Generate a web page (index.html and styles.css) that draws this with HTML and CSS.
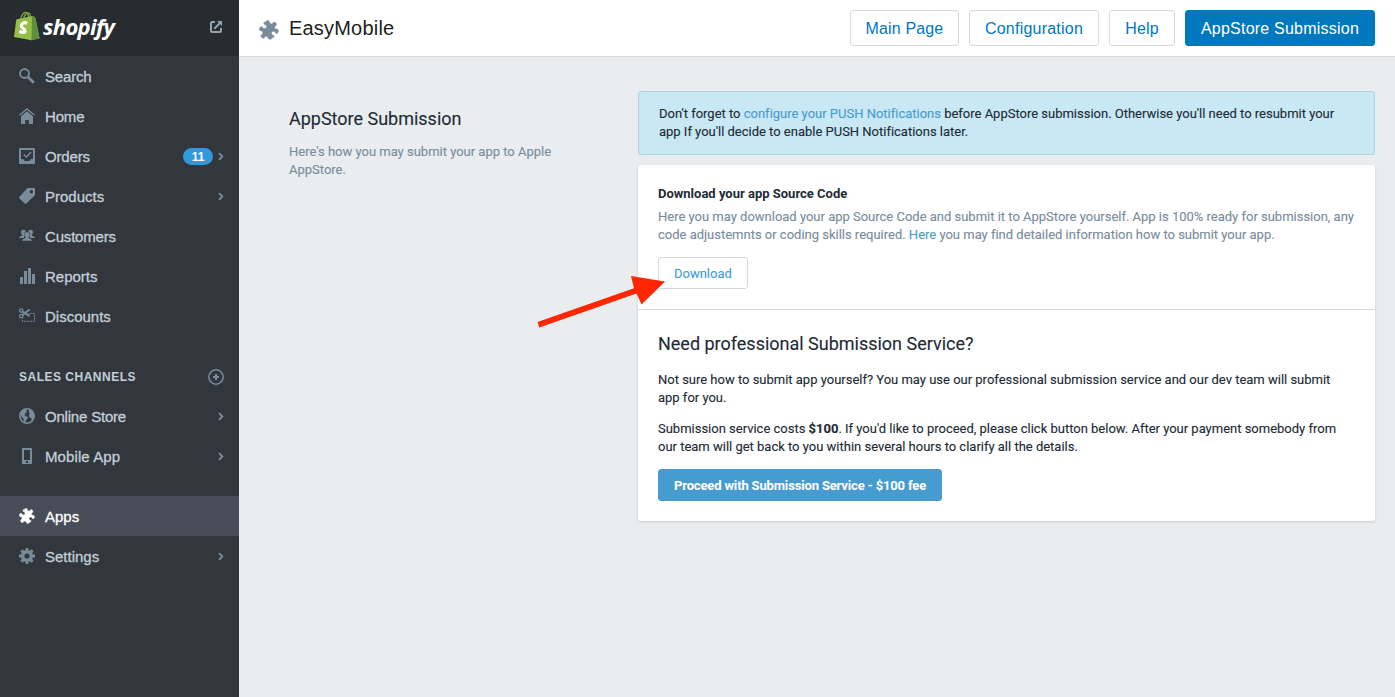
FILE: index.html
```html
<!DOCTYPE html>
<html lang="en">
<head>
<meta charset="utf-8">
<title>EasyMobile</title>
<link rel="stylesheet" href="styles.css">
</head>
<body>
<svg class="defs" aria-hidden="true">
  <symbol id="puzzle" viewBox="0 0 20 20">
    <path d="M7.600.8 10 .9 10.700 3.300 13 4.200 14.800 2 17 3 17.400 4.900 15.400 7 16 9 18.600 9.300 19.500 11.300 18.200 13.400 16.600 12.900 15.800 11.200 13.600 11.200 12.200 13.200 13.200 15.200 15 15.800 14.600 17.500 12.600 17.800 11.800 19.400 9.600 18.700 8.500 16.500 6.400 16.200 4.800 18.200 2.600 17.600 2 15.600 4 13.200 3.200 11 .9 10.400.5 8.300 2 6.600 3.600 7.300 4.700 8.800 6.900 8.500 7.800 6.500 6.700 4.700 4.900 4 5.300 2.200 7.100 2z" fill="currentColor" stroke="currentColor" stroke-width=".7" stroke-linejoin="round"/>
  </symbol>
  <symbol id="chevron" viewBox="0 0 6 9"><path d="M1 1.200 4.300 4.500 1 7.800" fill="none" stroke="currentColor" stroke-width="1.900"/></symbol>
</svg>
<div class="app">
  <nav class="sidebar">
    <div class="brand">
      <svg class="bag" width="26" height="30" viewBox="0 0 26 30">
        <path d="M6.500 9C7 4 10 1 12 1.500c2 .4 2.500 3 2.500 6M9.500 8C10 4.500 12.500 1.500 14.500 2c1.700.5 2 3 2 5" fill="none" stroke="#82ad3b" stroke-width="1.300"/>
        <path d="M2.300 8.500 18 5l2 .5 1.500 1.800 4 20L17.500 29.200 0 26z" fill="#95bf47"/>
        <path d="m18 5 2 .5 1.500 1.800 4 20-8 1.900z" fill="#5e8e3e"/>
        <path d="M13.200 12.300c-3-1.600-6 .2-6 2.500 0 2.700 4 2.700 3.800 5-.2 2-2.800 2.200-5.500.3" fill="none" stroke="#fff" stroke-width="3.200"/>
      </svg>
      <span class="brand-name">shopify</span>
      <svg class="external" width="12" height="12" viewBox="0 0 12 12" fill="none" stroke="#93a4b3" stroke-width="2">
        <path d="M5 1H2Q1 1 1 2v8q0 1 1 1h8q1 0 1-1V7M4.300 7.700 10 2"/><path d="M7 0h5v5z" fill="#93a4b3" stroke="none"/>
      </svg>
    </div>
    <a class="item"><svg class="icon" viewBox="0 0 16 16"><circle cx="5.500" cy="5.500" r="4.500" fill="none" stroke="currentColor" stroke-width="1.800"/><path d="m9 9 5.800 5.700" stroke="currentColor" stroke-width="2.900"/></svg><span class="tight">Search</span></a>
    <a class="item"><svg class="icon" viewBox="0 0 16 16"><path d="M.4 7.300 8 .9l7.600 6.400" fill="none" stroke="currentColor" stroke-width="1.300"/><path d="M2 8.300 8 3.300l6 5V16H9.800v-4H6.200v4H2z"/></svg><span class="tight">Home</span></a>
    <a class="item"><svg class="icon" viewBox="0 0 16 16"><path fill-rule="evenodd" d="M1 0h14q1 0 1 1v14q0 1-1 1H1q-1 0-1-1V1q0-1 1-1zm1 2v9h2l1.500 2h5L12 11h2V2z"/><path d="m4.700 6.500 2.600 2.500 4.900-5" fill="none" stroke="currentColor" stroke-width="1.500"/></svg><span class="tight">Orders</span><b class="badge">11</b><svg class="chev"><use href="#chevron"/></svg></a>
    <a class="item"><svg class="icon" viewBox="0 0 16 16"><path fill-rule="evenodd" d="M9 0h6q1 0 1 1v5.500q0 .7-.5 1.200L7 15.700q-.5.500-1 0L.2 10.200q-.4-.5 0-1L8 .5Q8.400 0 9 0zm3.300 2a1.700 1.700 0 1 0 0 3.400 1.700 1.700 0 0 0 0-3.400z"/></svg><span>Products</span><svg class="chev"><use href="#chevron"/></svg></a>
    <a class="item"><svg class="icon" viewBox="0 0 16 16"><path d="M2 4C2 1.200 6.800 1.200 6.600 3.600 5.500 4.500 5.200 6 5.700 7.600L5 10H0c0-1.700 2-1.600 3.200-2.600C3.500 6.800 2 6 2 4zM14 4C14 1.200 9.200 1.200 9.400 3.600c1.300.8 1.300 2.600.8 4L11 10h5c0-1.700-2-1.600-3.200-2.600C12.500 6.800 14 6 14 4z"/><path d="M5.300 6.200C5.300 3 10.700 3 10.700 6.200c0 1.500-.3 2-1.100 3 .2 1.800 3.700 1 3.700 3.800H2.700c0-2.800 3.500-2 3.700-3.800-.8-1-1.100-1.500-1.100-3z" stroke="#31373d" stroke-width=".5"/></svg><span class="tight">Customers</span></a>
    <a class="item"><svg class="icon" viewBox="0 0 16 16"><path d="M1 9h3v7H1zm4-6h3v13H5zm4-3h3v16H9zm4 6h3v10h-3z"/></svg><span>Reports</span></a>
    <a class="item"><svg class="icon line" viewBox="0 0 16 16" stroke="currentColor"><g stroke-width="1.200"><circle cx="2.300" cy="2.500" r="1.700"/><circle cx="2.300" cy="8.100" r="1.700"/></g><path d="m3.600 3.600 7 4.500M3.600 7 10.500 1.500" stroke-width="2"/><path d="M10.500 5.500h5v7.800H3.500v-2.800" stroke-dasharray="2 1"/></svg><span>Discounts</span></a>
    <div class="heading"><span>SALES CHANNELS</span><svg width="16" height="16" viewBox="0 0 16 16" fill="none" stroke="#798c9c"><circle cx="8" cy="8" r="7.200" stroke-width="1.500"/><path d="M8 5v6M5 8h6" stroke-width="2"/></svg></div>
    <a class="item"><svg class="icon" viewBox="0 0 16 16"><circle cx="8" cy="8" r="7.200" fill="none" stroke="currentColor" stroke-width="1.600"/><path d="M2 3.500 5 1l3 .5-.8 1.500 1 1-2.200 1 .5 1.500-1.500.3 1.700 1.500 2 .5-.2 2-1.500 1.200-.5 2.500-1.500-1L4.500 11 2 8zM10 1.500l3.500 1.800L15.300 8l-1 3.500-1.500 1.500-.6-3-1.700-.5-.7-2 1-2-1-1.500z"/></svg><span class="store">Online Store</span><svg class="chev"><use href="#chevron"/></svg></a>
    <a class="item"><svg class="icon" viewBox="0 0 16 16"><path fill-rule="evenodd" d="M4 0h8q1 0 1 1v14q0 1-1 1H4q-1 0-1-1V1q0-1 1-1zm1 2v10h6V2zm2 11v2h2v-2z"/></svg><span class="mobile">Mobile App</span><svg class="chev"><use href="#chevron"/></svg></a>
    <a class="item active"><svg class="icon"><use href="#puzzle"/></svg><span>Apps</span></a>
    <a class="item"><svg class="icon" viewBox="0 0 16 16"><circle cx="8" cy="8" r="4.300" fill="none" stroke="currentColor" stroke-width="3.400"/><path d="M8 0v3M8 13v3M0 8h3M13 8h3M2.400 2.400l2 2M11.600 11.600l2 2M2.400 13.600l2-2M11.600 4.400l2-2" stroke="currentColor" stroke-width="2.900"/></svg><span>Settings</span><svg class="chev"><use href="#chevron"/></svg></a>
  </nav>
  <div class="main">
    <header class="topbar">
      <svg class="title-icon" width="20" height="20"><use href="#puzzle"/></svg>
      <h1>EasyMobile</h1>
      <div class="actions">
        <a class="btn b-main">Main Page</a>
        <a class="btn b-conf">Configuration</a>
        <a class="btn b-help">Help</a>
        <a class="btn b-app primary">AppStore Submission</a>
      </div>
    </header>
    <div class="content">
      <section class="intro">
        <h2>AppStore Submission</h2>
        <p>Here's how you may submit your app to Apple<br>AppStore.</p>
      </section>
      <section class="panel">
        <div class="notice">Don't forget to <a>configure your PUSH Notifications</a> before AppStore submission. Otherwise you'll need to resubmit your<br>app If you'll decide to enable PUSH Notifications later.</div>
        <div class="card">
          <div class="download">
            <h3>Download your app Source Code</h3>
            <p>Here you may download your app Source Code and submit it to AppStore yourself. App is 100% ready for submission, any<br>code adjustemnts or coding skills required. <a>Here</a> you may find detailed information how to submit your app.</p>
            <a class="small-btn">Download</a>
          </div>
          <div class="service">
            <h2>Need professional Submission Service?</h2>
            <p>Not sure how to submit app yourself? You may use our professional submission service and our dev team will submit<br>app for you.</p>
            <p>Submission service costs <b>$100</b>. If you'd like to proceed, please click button below. After your payment somebody from<br>our team will get back to you within several hours to clarify all the details.</p>
            <a class="small-btn fee">Proceed with Submission Service - $100 fee</a>
          </div>
        </div>
      </section>
    </div>
  </div>
  <svg class="arrow" width="130" height="56" viewBox="0 0 130 56"><path d="M.5 47 97 13.200 94 1 128 6.500 104.500 29.500 99.500 18.500 2.300 52.500z" fill="#ff2600"/></svg>
</div>
</body>
</html>
```
FILE: styles.css
```css
* { box-sizing: border-box; }
body { margin: 0; font: 13px/18px Roboto, sans-serif; color: #212b35; letter-spacing: -.008px; }
h1, h2, h3, p { margin: 0; font-weight: 400; }
.defs { position: absolute; width: 0; height: 0; }
.app { display: flex; position: relative; height: 697px; overflow: hidden; background: #e9edf0; }

.sidebar { width: 239px; flex: none; background: #31373d; font-family: "Liberation Sans", sans-serif; }
.brand { height: 56px; background: #272c30; display: flex; align-items: center; padding: 0 17px 2px 14px; }
.bag { margin-top: -2px; }
.brand-name { margin: -2px 0 0 3px; font: italic 700 22px/30px "Open Sans", sans-serif; color: #fff; letter-spacing: -.65px; }
.external { margin-left: auto; }
.item { display: flex; align-items: center; height: 40px; padding: 0 15px 0 19px; font-size: 15px; letter-spacing: 0; color: #c3cfd8; -webkit-text-stroke: .3px; }
.item span { margin: 2px auto 0 10px; white-space: nowrap; }
.item .tight { letter-spacing: -.18px; }
.item .store { letter-spacing: -.2px; }
.item .mobile { letter-spacing: .1px; }
.icon { width: 16px; height: 16px; fill: currentColor; color: #798c9c; }
.line { fill: none; }
.chev { width: 6px; height: 9px; color: #798c9c; }
.badge { width: 30px; height: 17px; border-radius: 9px; margin: 1px 5px 0 0; background: #3199db; color: #fff; font: 700 12px/18px "Liberation Sans", sans-serif; text-align: center; -webkit-text-stroke: 0; }
.heading { display: flex; align-items: center; justify-content: space-between; height: 40px; margin-top: 20px; padding: 2px 15px 0 19px; color: #c3cfd8; font-size: 12px; font-weight: 700; letter-spacing: .5px; }
.active { margin-top: 20px; background: #474e57; color: #fff; }
.active .icon { color: #fff; }

.main { flex: 1; }
.topbar { display: flex; align-items: center; height: 57px; padding: 0 20px 1px; background: #fff; border-bottom: 1px solid #d3dbe2; font-family: "Liberation Sans", sans-serif; }
.title-icon { color: #798c9c; margin-top: 4px; }
h1 { margin-left: 10px; font-size: 20px; line-height: 24px; letter-spacing: .2px; color: #1c1e20; }
.actions { display: flex; gap: 10px; margin-left: auto; }
.btn { display: flex; align-items: center; justify-content: center; height: 36px; padding-top: 2px; border: 1px solid #d3dbe2; border-radius: 3px; font-size: 16px; line-height: 18px; letter-spacing: .15px; color: #0078bd; white-space: nowrap; }
.b-main { width: 109px; }
.b-conf { width: 130px; letter-spacing: .22px; }
.b-help { width: 66px; }
.b-app { width: 190px; letter-spacing: .22px; }
.primary { background: #0078bd; border-color: #0078bd; color: #fff; }

.content { display: flex; padding: 34px 20px 0 50px; -webkit-text-stroke: .12px; }
.intro { width: 349px; padding-top: 16px; color: #798c9c; }
h2 { font-size: 18px; line-height: 24px; color: #212b35; }
.intro p { margin-top: 12px; }
.panel { flex: 1; white-space: nowrap; }
.panel a { color: #479ccf; }
.notice { height: 64px; padding: 13px 20px; background: #c9e8f5; border: 1px solid #b0d2e0; border-radius: 3px; }
.card { margin-top: 10px; background: #fff; border-radius: 3px; box-shadow: 0 1px 3px rgba(60, 80, 95, .2); }
.download { height: 145px; padding: 20px; border-bottom: 1px solid #d3dbe2; }
h3 { font-size: 13px; font-weight: 700; letter-spacing: 0; -webkit-text-stroke: 0; }
.download p { margin-top: 5px; color: #798c9c; }
.small-btn { display: inline-block; height: 32px; margin-top: 13px; padding: 7px 15px 5px; border: 1px solid #d3dbe2; border-radius: 3px; }
.service { height: 211px; padding: 22px 20px; }
.service p { margin-bottom: 13px; }
.service h2 { margin-bottom: 15px; }
.panel .fee { margin-top: 0; background: #479ccf; border-color: #479ccf; color: #fff; font-weight: 700; letter-spacing: -.15px; -webkit-text-stroke: 0; }

.arrow { position: absolute; left: 537px; top: 275px; }
```
